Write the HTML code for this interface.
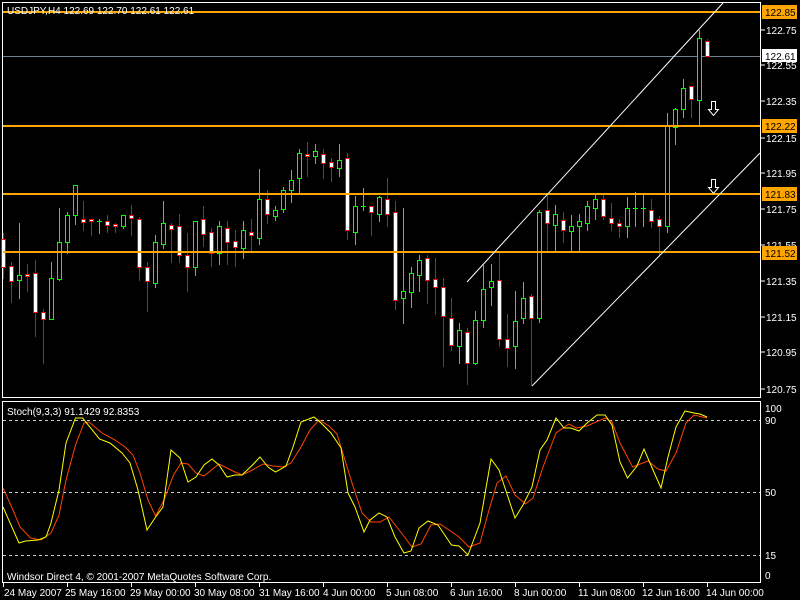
<!DOCTYPE html>
<html><head><meta charset="utf-8"><style>
html,body{margin:0;padding:0;background:#000;width:800px;height:600px;overflow:hidden}
svg{display:block}
text{font-family:"Liberation Sans",sans-serif;font-size:10px;fill:#fff}
</style></head><body>
<svg id="s" width="800" height="600" viewBox="0 0 800 600" xmlns="http://www.w3.org/2000/svg">
<rect width="800" height="600" fill="#000"/>
<g stroke="#fff" stroke-width="1" fill="none" shape-rendering="crispEdges">
<path d="M2.5 2.5H760.5V397.5H2.5Z"/>
<path d="M2.5 401.5H760.5V582.5H2.5Z"/>
</g>
<line x1="3" y1="56.5" x2="760" y2="56.5" stroke="#708090" shape-rendering="crispEdges"/>
<g id="candles" shape-rendering="crispEdges"></g>
<g stroke="#FFA500" stroke-width="2" shape-rendering="crispEdges">
<line x1="3" y1="12" x2="760" y2="12"/><line x1="3" y1="126" x2="760" y2="126"/>
<line x1="3" y1="194" x2="760" y2="194"/><line x1="3" y1="252" x2="760" y2="252"/>
</g>
<g stroke="#fff" stroke-width="1">
<line x1="467" y1="282" x2="723" y2="3"/>
<line x1="532" y1="386" x2="760" y2="153"/>
</g>
<g fill="none" stroke="#fff" stroke-width="1">
<path d="M711.5 101.5h4v8h3l-5 6l-5-6h3z"/>
<path d="M711.5 179.5h4v8h3l-5 6l-5-6h3z"/>
</g>
<text x="7" y="14">USDJPY,H4  122.69 122.70 122.61 122.61</text>
<g stroke="#fff" shape-rendering="crispEdges">
<line x1="761" y1="30" x2="765" y2="30"/><line x1="761" y1="65" x2="765" y2="65"/><line x1="761" y1="101" x2="765" y2="101"/>
<line x1="761" y1="138" x2="765" y2="138"/><line x1="761" y1="173" x2="765" y2="173"/><line x1="761" y1="209" x2="765" y2="209"/>
<line x1="761" y1="245" x2="765" y2="245"/><line x1="761" y1="281" x2="765" y2="281"/><line x1="761" y1="317" x2="765" y2="317"/>
<line x1="761" y1="352" x2="765" y2="352"/><line x1="761" y1="389" x2="765" y2="389"/>
</g>
<text x="766" y="34">122.75</text><text x="766" y="69">122.55</text><text x="766" y="105">122.35</text>
<text x="766" y="142">122.15</text><text x="766" y="177">121.95</text><text x="766" y="213">121.75</text>
<text x="766" y="249">121.55</text><text x="766" y="285">121.35</text><text x="766" y="321">121.15</text>
<text x="766" y="356">120.95</text><text x="766" y="393">120.75</text>
<rect x="762" y="5" width="35" height="14" fill="#FFA500"/><text x="765" y="16" style="fill:#000">122.85</text>
<rect x="762" y="49" width="35" height="13" fill="#fff"/><text x="765" y="60" style="fill:#000">122.61</text>
<rect x="762" y="119" width="35" height="14" fill="#FFA500"/><text x="765" y="130" style="fill:#000">122.22</text>
<rect x="762" y="187" width="35" height="14" fill="#FFA500"/><text x="765" y="198" style="fill:#000">121.83</text>
<rect x="762" y="246" width="35" height="14" fill="#FFA500"/><text x="765" y="257" style="fill:#000">121.52</text>
<g stroke="#c8c8c8" stroke-dasharray="3,3" shape-rendering="crispEdges">
<line x1="3" y1="420.5" x2="760" y2="420.5"/><line x1="3" y1="492.5" x2="760" y2="492.5"/><line x1="3" y1="555.5" x2="760" y2="555.5"/>
</g>
<polyline id="sig" fill="none" stroke="#FF4500" stroke-width="1"/>
<polyline id="main" fill="none" stroke="#FFFF00" stroke-width="1"/>
<text x="7" y="415">Stoch(9,3,3) 91.1429 92.8353</text>
<text x="7" y="580">Windsor Direct 4, © 2001-2007 MetaQuotes Software Corp.</text>
<text x="765" y="412">100</text><text x="765" y="424">90</text><text x="765" y="496">50</text>
<text x="765" y="559">15</text><text x="765" y="579">0</text>
<g stroke="#fff" shape-rendering="crispEdges" id="ticks"></g>
<text x="4" y="596">24 May 2007</text><text x="65" y="596">25 May 16:00</text><text x="130" y="596">29 May 00:00</text>
<text x="194" y="596">30 May 08:00</text><text x="259" y="596">31 May 16:00</text><text x="323" y="596">4 Jun 00:00</text>
<text x="386" y="596">5 Jun 08:00</text><text x="450" y="596">6 Jun 16:00</text><text x="514" y="596">8 Jun 00:00</text>
<text x="578" y="596">11 Jun 08:00</text><text x="642" y="596">12 Jun 16:00</text><text x="706" y="596">14 Jun 00:00</text>
</svg>
<script>
var C=[
"b",239,267,233,279,"b",266,281,262,303,"g",275,280,223,299,"b",274,276,264,292,"b",273,312,260,337,"b",312,319,309,364,
"g",278,319,262,319,"g",242,279,208,281,"g",215,242,212,254,"g",185,215,185,225,"b",219,222,201,231,"b",219,221,219,236,
"g",221,221,219,234,"b",221,225,215,233,"b",224,226,223,233,"g",215,226,215,229,"b",215,218,205,236,"b",219,267,217,281,
"b",267,281,262,312,"g",242,283,235,288,"g",223,244,201,249,"b",225,229,223,263,"b",226,255,214,263,"b",255,267,233,292,
"g",221,267,221,276,"b",219,234,206,247,"b",232,253,228,267,"g",226,253,221,265,"b",228,242,221,265,"b",241,247,230,267,
"g",230,248,221,259,"b",232,235,219,253,"g",199,238,169,245,"b",199,214,190,224,"g",210,216,206,221,"g",190,209,187,213,
"g",180,190,170,203,"g",153,178,149,193,"b",154,156,142,177,"g",151,156,144,164,"b",154,163,149,179,"b",162,167,158,182,
"g",160,168,144,177,"b",158,230,153,240,"g",206,232,196,245,"g",206,206,188,211,"b",206,212,206,236,"g",197,214,196,222,
"b",199,214,178,227,"b",212,300,201,310,"g",291,298,208,324,"g",273,292,267,308,"g",260,275,255,292,"b",258,280,255,304,
"b",279,287,258,315,"b",287,316,278,367,"b",318,345,298,351,"g",330,346,323,364,"b",332,363,328,385,"g",320,363,311,365,
"g",289,320,265,328,"g",281,287,264,306,"b",280,339,252,347,"b",339,348,314,367,"g",321,346,291,369,"g",298,318,282,324,
"b",296,318,294,386,"g",212,318,210,323,"b",210,223,195,252,"g",214,225,205,251,"b",220,230,212,243,"g",226,231,215,251,
"g",221,226,214,251,"g",206,223,201,231,"g",199,208,195,220,"b",199,216,195,220,"b",218,223,203,231,"b",223,226,219,238,
"g",208,226,197,238,"g",208,208,192,227,"g",208,208,195,227,"b",210,221,199,228,"b",219,226,216,255,"g",126,226,113,233,
"g",109,127,108,145,"g",88,109,79,118,"b",86,99,86,118,"g",38,100,30,126,"b",41,56,39,56];
var NS="http://www.w3.org/2000/svg",g=document.getElementById("candles"),h="";
for(var i=0;i<C.length/5;i++){var t=C[i*5],o=C[i*5+1],c=C[i*5+2],hi=C[i*5+3],lo=C[i*5+4];
var x=3+8*i,col=t=="b"?"#FF0000":"#00FF00",fill=t=="b"?"#fff":"#000";
h+='<line x1="'+(x+.5)+'" y1="'+hi+'" x2="'+(x+.5)+'" y2="'+lo+'" stroke="'+col+'"/>';
if(c-o<1)h+='<line x1="'+(x-2)+'" y1="'+(o+.5)+'" x2="'+(x+3)+'" y2="'+(o+.5)+'" stroke="'+col+'"/>';
else h+='<rect x="'+(x-1.5)+'" y="'+(o+.5)+'" width="4" height="'+(c-o)+'" fill="'+fill+'" stroke="'+col+'"/>';}
g.innerHTML=h;
document.getElementById("main").setAttribute("points","3,507 19,543 25.5,541 38,540 46,537 51,523 59,490 66,443 75.5,418 82.6,418 99.5,439 110,443 122,453 130,463 138,490 147,530 155.6,517 163,507 171,450 180,458 188,482 196,477 204,465 212,459 219,465 227,477 235,475 242,475 252.5,465 260,457 268,467 275.5,472 286,466 293,447 301,422 314,417 321,423 331,433 341,448 348,493 355,507 364,532 370,520 379,513 387,517 395,537 404,553 411,551 419,528 428,521 438,525 451.5,545 459,546 468,555 480,523 491,459 499,470 508,497 515,518 523,505 532,487 540,450 547,440 556,418 564,428 571,428 579,431 587,423 597,415 605,415 612,425 620,462 627.5,478 637,466 644,449 653,470 661,488 668,457 676,427 685,411 694,413 700,414 707,417");
document.getElementById("sig").setAttribute("points","3,488 13,510 20,527 30.6,538 41,540 51,533 59,515 66,480 75.5,445 84,423 89,422 102,433 115,440 125,447 133,455 140,473 148,500 155.6,516 164,500 173.5,475 181,463 188,464 196,473 204,476 219,464 235,472 242,475 252.5,470 263,464 273,466 283,467 291,463 301,447 310,430 319,420 329,426 337,434 344,457 352,483 362,513 371,522 380,522 389,517 403,535 412,547 421,544 431,525 440,524 449,530 459,537 469,547 480,543 487,517 497,483 506,476 515,495 525.5,504 533,498 543,467 556,433 569,424 576.5,428 587,426 605,418 612,422 620,443 632.6,467 648,461 658,469 666,471 676,453 686,423 694,415 707,418");
var tk="";[3,67,131,195,259,323,387,451,515,579,643,707].forEach(function(x){tk+='<line x1="'+(x+.5)+'" y1="583" x2="'+(x+.5)+'" y2="587"/>';});
document.getElementById("ticks").innerHTML=tk;
</script>
</body></html>
